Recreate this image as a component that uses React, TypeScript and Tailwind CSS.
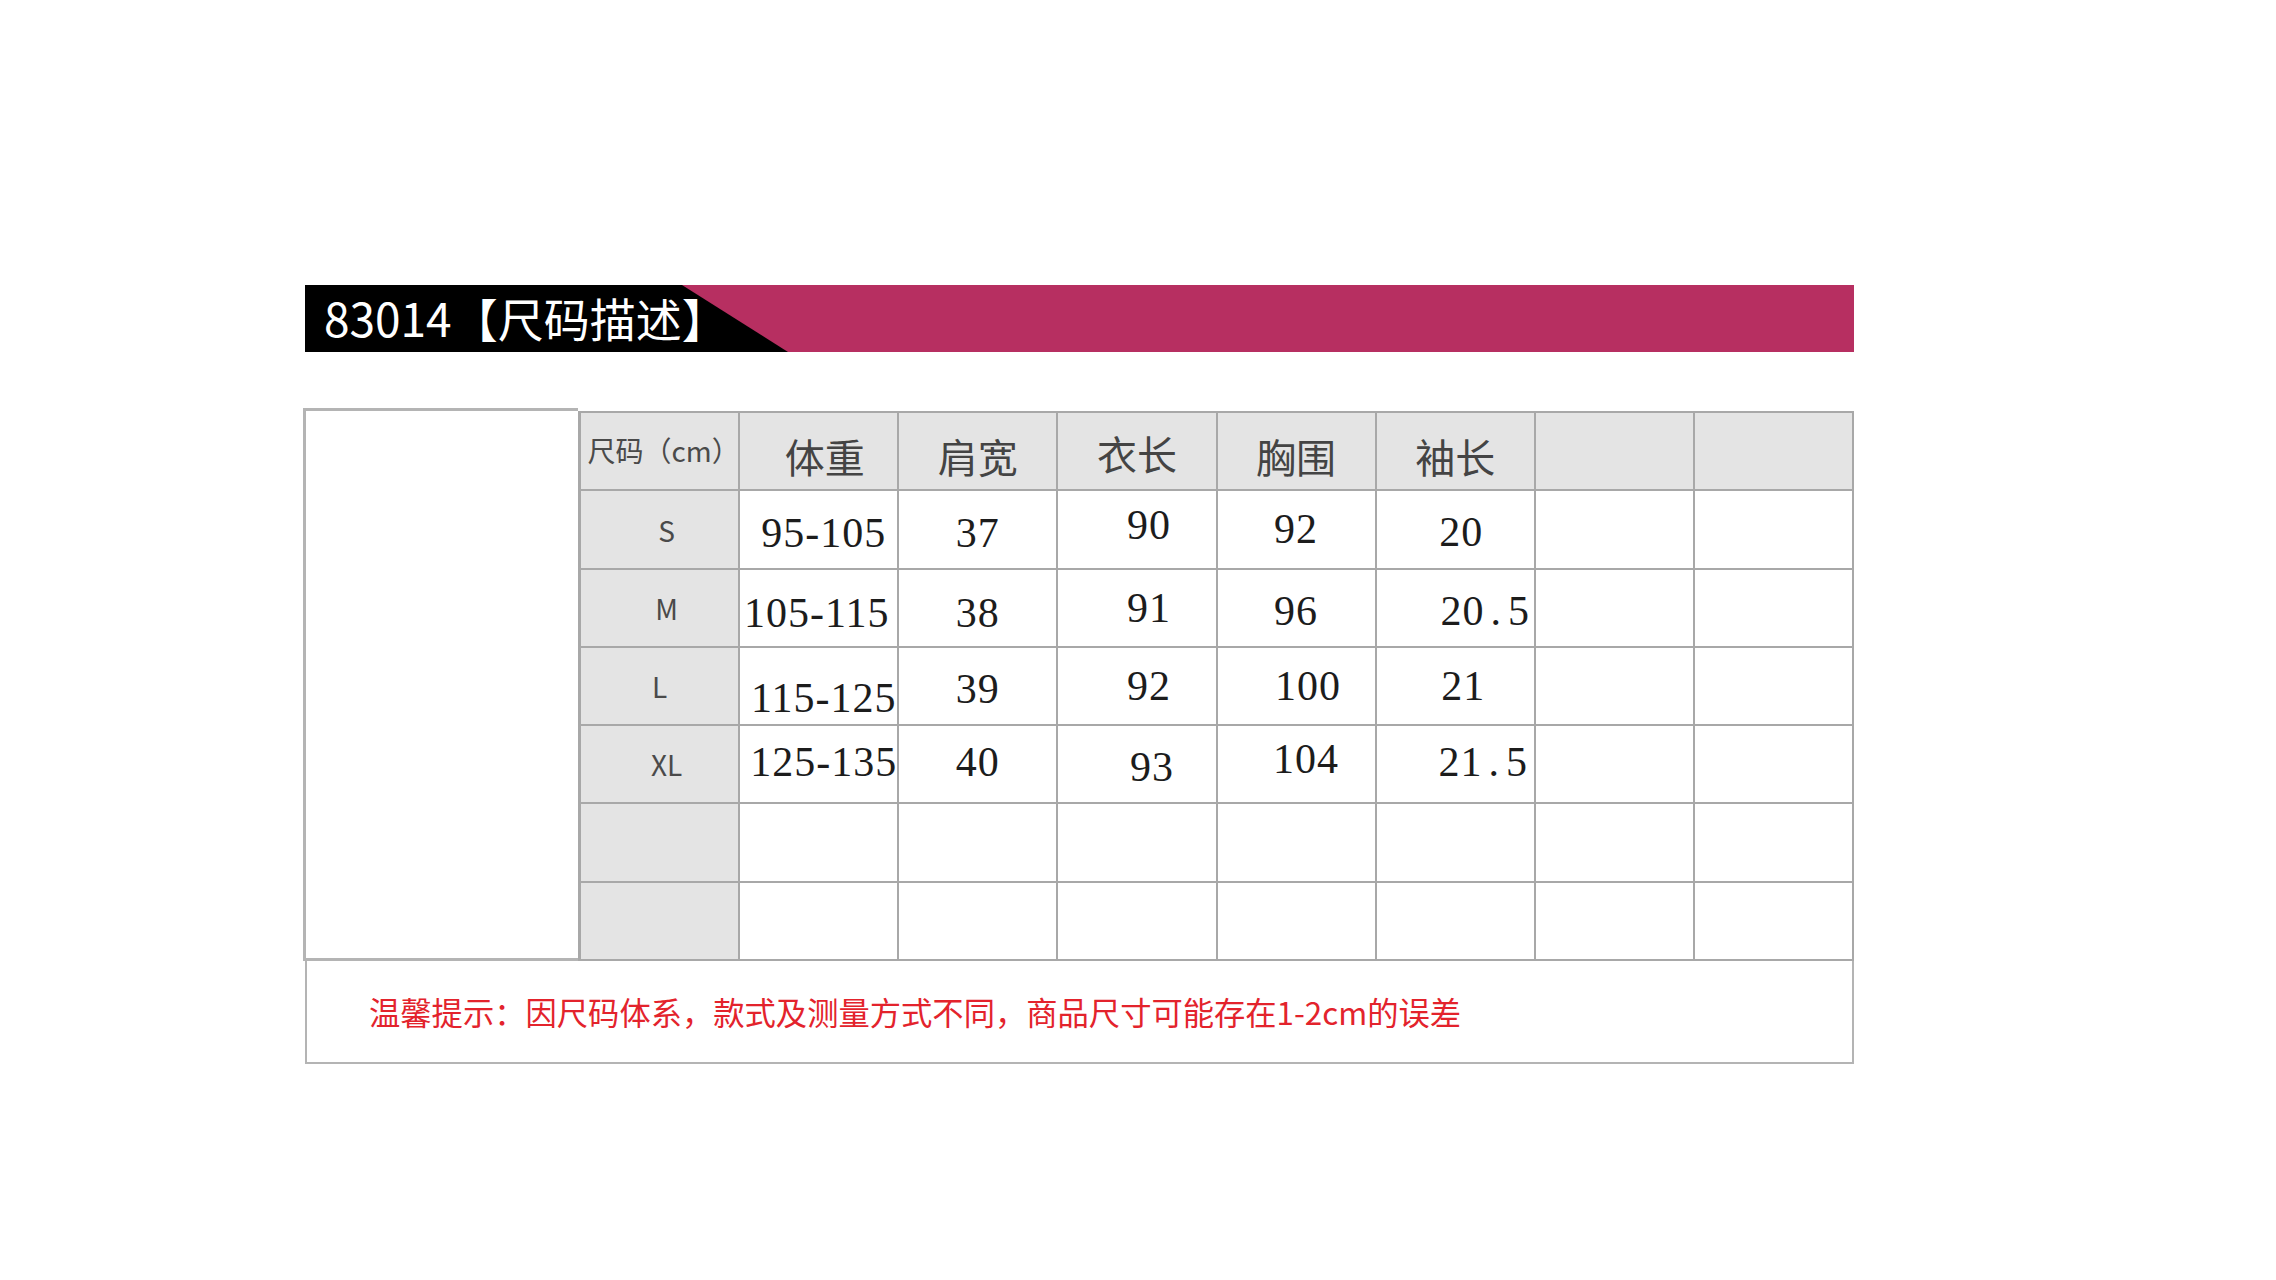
import React from 'react'

type Cell = { text: React.ReactNode; cls?: string }

const cjk = "font-['Noto_Sans_CJK_SC',sans-serif]"
const serif = "font-['Liberation_Serif','Noto_Sans_CJK_SC',serif]"

const headers: Cell[] = [
  { text: '体重', cls: 'pl-[12px] pt-[10px]' },
  { text: '肩宽', cls: 'pt-[10px]' },
  { text: '衣长', cls: 'pt-[4px]' },
  { text: '胸围', cls: 'pt-[10px]' },
  { text: '袖长', cls: 'pt-[10px]' },
  { text: '' },
  { text: '' },
]

const dot = <span className="mx-[6px]">.</span>

const rows: { size: Cell; vals: Cell[] }[] = [
  {
    size: { text: 'S', cls: 'pl-[14px] pt-[2px]' },
    vals: [
      { text: '95-105', cls: 'pl-[10px] pt-[8px]' },
      { text: '37', cls: 'pt-[8px]' },
      { text: '90', cls: 'pl-[24px] pb-[8px]' },
      { text: '92' },
      { text: '20', cls: 'pl-[12px] pt-[6px]' },
    ],
  },
  {
    size: { text: 'M', cls: 'pl-[14px]' },
    vals: [
      { text: '105-115', cls: 'pr-[4px] pt-[10px]' },
      { text: '38', cls: 'pt-[10px]' },
      { text: '91', cls: 'pl-[24px]' },
      { text: '96', cls: 'pt-[6px]' },
      { text: <>20{dot}5</>, cls: 'pl-[60px] pt-[6px]' },
    ],
  },
  {
    size: { text: 'L' },
    vals: [
      { text: '115-125', cls: 'pl-[10px] pt-[24px]' },
      { text: '39', cls: 'pt-[6px]' },
      { text: '92', cls: 'pl-[24px]' },
      { text: '100', cls: 'pl-[24px]' },
      { text: '21', cls: 'pl-[16px]' },
    ],
  },
  {
    size: { text: 'XL', cls: 'pl-[14px]' },
    vals: [
      { text: '125-135', cls: 'pl-[10px] pb-[4px]' },
      { text: '40', cls: 'pb-[4px]' },
      { text: '93', cls: 'pl-[30px] pt-[6px]' },
      { text: '104', cls: 'pl-[20px] pb-[10px]' },
      { text: <>21{dot}5</>, cls: 'pl-[56px] pb-[4px]' },
    ],
  },
]

const fonts = {
  head: `${cjk} text-[40px] text-[#444]`,
  size: `${cjk} text-[28px] text-[#4a4a4a]`,
  num: `${serif} text-[42px] tracking-[1px] text-[#1c1c1c]`,
}

function GridCell({ cell, kind }: { cell: Cell; kind: 'head' | 'size' | 'num' }) {
  const base =
    'flex h-[78.3px] items-center justify-center whitespace-nowrap border-r-2 border-b-2 border-[#a8a8a8] leading-none'
  const bg = kind === 'num' ? 'bg-white' : 'bg-[#e4e4e4]'
  return <div className={`${base} ${bg} ${fonts[kind]} ${cell.cls ?? ''}`}>{cell.text}</div>
}

export default function App() {
  return (
    <div className="h-[1280px] w-[2276px] bg-white pl-[303px] pt-[285px]">
      <div className="ml-[2px] flex h-[67px] w-[1549px] bg-[#b72f61]">
        <div className="flex h-full w-[483px] items-center bg-black pl-[19px] [clip-path:polygon(0_0,377px_0,483px_100%,0_100%)]">
          <span className={`${cjk} pb-[3px] text-[46px] leading-none text-white`}>83014【尺码描述】</span>
        </div>
      </div>

      <div className="mt-[56px] flex items-end">
        <div className="h-[553px] w-[275px] border-[3px] border-r-0 border-[#b4b4b4] bg-white" />
        <div className="grid w-[1276px] grid-cols-8 border-t-2 border-l-[3px] border-[#a8a8a8]">
          <GridCell cell={{ text: '尺码（cm）', cls: 'text-[23px] pl-[8px] pb-[2px]' }} kind="size" />
          {headers.map((h, i) => (
            <GridCell key={i} cell={h} kind="head" />
          ))}
          {rows.map((r, ri) => (
            <React.Fragment key={ri}>
              <GridCell cell={r.size} kind="size" />
              {r.vals.map((v, vi) => (
                <GridCell key={vi} cell={v} kind="num" />
              ))}
              <GridCell cell={{ text: '' }} kind="num" />
              <GridCell cell={{ text: '' }} kind="num" />
            </React.Fragment>
          ))}
          {[0, 1].map((ri) => (
            <React.Fragment key={`e${ri}`}>
              <GridCell cell={{ text: '' }} kind="size" />
              {[0, 1, 2, 3, 4, 5, 6].map((ci) => (
                <GridCell key={ci} cell={{ text: '' }} kind="num" />
              ))}
            </React.Fragment>
          ))}
        </div>
      </div>

      <div className="ml-[2px] flex h-[103px] w-[1549px] items-center border-2 border-t-0 border-[#b4b4b4] pl-[62px]">
        <span className={`${cjk} text-[31.3px] leading-none text-[#e3232c]`}>
          温馨提示：因尺码体系，款式及测量方式不同，商品尺寸可能存在1-2cm的误差
        </span>
      </div>
    </div>
  )
}
